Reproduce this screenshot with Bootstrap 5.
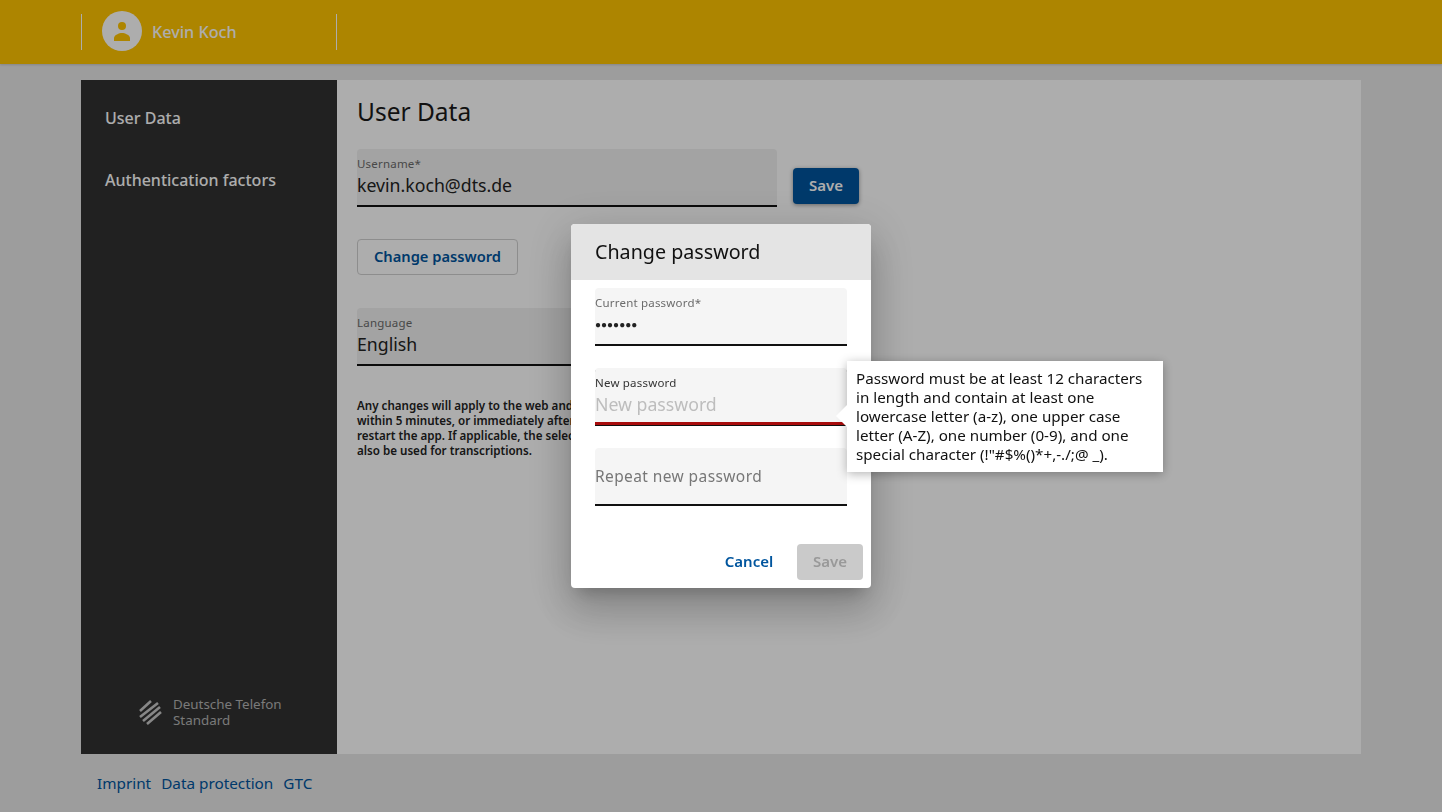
<!DOCTYPE html>
<html lang="en"><head><meta charset="utf-8"><title>User Data</title>
<link rel="stylesheet" href="https://cdn.jsdelivr.net/npm/bootstrap@5.3.0/dist/css/bootstrap.min.css">
<style>
html,body{height:100%}
body{background:#e7e7e7;font-family:"Noto Sans","Open Sans",sans-serif;color:#222;overflow:hidden}
.topbar{height:64px;background:#ffc400;box-shadow:0 1px 2px rgba(0,0,0,.15)}
.shell{width:1280px;margin-left:81px}
.who{width:256px;height:36px;border-left:1px solid #fff;border-right:1px solid #fff;margin-top:14px;padding-left:20px;color:#fff;font-size:16.200px;font-weight:500}
.who-gap{gap:10px}
.avatar{width:40px;height:40px;border-radius:50%;background:#fff;color:#ffc400}
.avatar-outer{margin-top:-2px}
.main{height:674px;margin-top:16px}
.side{width:256px;background:#323232;color:#fff;padding:28px 24px 24px;font-size:16px;font-weight:500}
a.side-link{display:block;height:62px;line-height:20px;color:#fff;text-decoration:none}
.brand{font-size:13.400px;line-height:16px;color:#b4b4b4;margin-left:33px;font-weight:400;padding-bottom:2px;gap:11px}
.pane{background:#fff;padding:20px;}
.pane h1{font-size:24.500px;font-weight:400;line-height:24px;margin:0 0 25px;color:#1a1a1a;height:24px}
.fieldbox{background:#f0f0f0;border-radius:4px 4px 0 0;border-bottom:2px solid #111;height:58px;padding:8px 0 0;font-size:17.700px;line-height:22px}
.fieldbox small{display:block;font-size:11.500px;line-height:14px;color:#6b6b6b;letter-spacing:.2px}
.fieldbox .val{display:block;line-height:26px;margin-top:1px}
.w420{width:420px}
.btn-fill{background:#00559e;border-radius:4px;color:#fff;font-weight:600;font-size:15px;height:36px;width:66px;padding:0 0 2px;border:0;margin:0 0 3px 16px;box-shadow:0 1px 4px rgba(0,0,0,.4)}
.btn-line{border:1px solid #d0d0d0;border-radius:4px;color:#00559e;background:transparent;font-weight:600;font-size:14.700px;height:36px;width:161px;padding:0 0 2px;margin:32px 0 33px}
.note{font-size:11.600px;font-weight:600;line-height:15px;margin-top:32px;color:#222;white-space:nowrap}
.foot{padding:18px 16px;font-size:15.300px;line-height:22px}
.foot a{color:#00559e;text-decoration:none;margin-right:10px}
.scrim{position:fixed;inset:0;background:rgba(0,0,0,.32);z-index:10}
.dlg{width:300px;height:364px;background:#fff;border-radius:4px;position:relative;box-shadow:0 11px 15px -7px rgba(0,0,0,.2),0 24px 38px 3px rgba(0,0,0,.14),0 9px 46px 8px rgba(0,0,0,.12)}
.dlg-head{height:56px;background:#e4e4e4;border-radius:4px 4px 0 0;padding:0 24px;font-size:19.700px;line-height:56px;color:#111}
.dlg-body{padding:8px 24px 0}
.dlg .fieldbox{background:#f5f5f5;margin-bottom:22px;border-bottom-color:#111}
.dlg .fieldbox .dots{font-size:10px;line-height:26px;color:#222;margin-top:1px}
.hint{color:#bdbdbd}
.dlg .fieldbox.err{border-bottom:3px solid #a80c0c;box-shadow:0 1px 0 #111;height:57px;margin-bottom:23px}
.label-on{color:#333!important}
.fieldbox.repeat{color:#777;font-size:15.500px;letter-spacing:.4px;line-height:56px;padding:0}
.dlg-foot{position:absolute;right:8px;bottom:8px}
.txt-btn{color:#00559e;background:none;border:0;font-weight:600;font-size:15px;width:96px;height:36px;padding:0 0 2px}
.off-btn{background:#cacaca;color:#999;border:0;border-radius:4px;font-weight:600;font-size:15px;width:66px;height:36px;padding:0 0 2px}
.tip{position:absolute;left:276px;top:137px;width:316px;height:111px;background:#fff;padding:8px 9px;font-size:15.200px;line-height:19px;color:#111;box-shadow:0 2px 10px rgba(0,0,0,.3);z-index:2;white-space:nowrap}
.tip:before{content:"";position:absolute;left:-11px;top:44px;border:11px solid transparent;border-left:0;border-right-color:#fff}
</style></head><body>
<header class="topbar"><div class="shell"><div class="who who-gap d-inline-flex align-items-center">
<span class="avatar avatar-outer d-flex align-items-center justify-content-center"><svg width="24" height="24" viewBox="0 0 24 24" fill="currentColor"><circle cx="12" cy="7" r="4"/><path d="M4 19c0-3 5.300-5 8-5s8 2 8 5v3H4z"/></svg></span><span>Kevin Koch</span></div></div></header>
<div class="shell main d-flex">
<aside class="side d-flex flex-column">
<a class="side-link" href="#">User Data</a><a class="side-link" href="#">Authentication factors</a>
<div class="mt-auto d-flex align-items-center brand"><svg width="24" height="26" viewBox="0 0 24 26" fill="none" stroke="#c8c8c8" stroke-width="2.600"><path d="M2 12 13 2M2 18 20 4M5 22 22 8M9 25 23 13"/></svg><span>Deutsche Telefon<br>Standard</span></div>
</aside>
<section class="pane flex-grow-1">
<h1>User Data</h1>
<div class="d-flex align-items-end"><div class="fieldbox w420"><small>Username*</small><span class="val">kevin.koch@dts.de</span></div><button class="btn-fill">Save</button></div>
<button class="btn-line d-block">Change password</button>
<div class="fieldbox w420"><small>Language</small><span class="val">English</span></div>
<p class="note">Any changes will apply to the web and mobile apps<br>within 5 minutes, or immediately after you<br>restart the app. If applicable, the selected language will<br>also be used for transcriptions.</p>
</section></div>
<footer class="shell foot"><a href="#">Imprint</a><a href="#">Data protection</a><a href="#">GTC</a></footer>
<div class="scrim d-flex align-items-center justify-content-center">
<div class="dlg">
<div class="dlg-head">Change password</div>
<div class="dlg-body">
<div class="fieldbox"><small>Current password*</small><span class="val dots">●●●●●●●</span></div>
<div class="fieldbox err"><small class="label-on">New password</small><span class="val hint">New password</span></div>
<div class="fieldbox repeat">Repeat new password</div>
</div>
<div class="dlg-foot d-flex"><button class="txt-btn">Cancel</button><button class="off-btn">Save</button></div>
<div class="tip">Password must be at least 12 characters<br>in length and contain at least one<br>lowercase letter (a-z), one upper case<br>letter (A-Z), one number (0-9), and one<br>special character (!"#$%()*+,-./;@ _).</div>
</div></div>
</body></html>
